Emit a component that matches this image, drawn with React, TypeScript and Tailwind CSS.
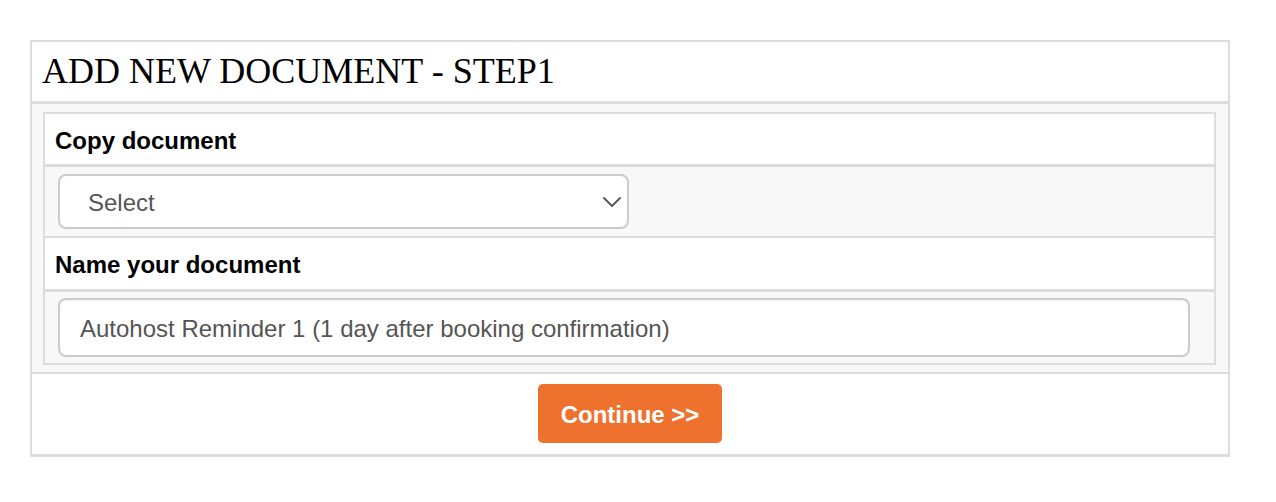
import React from "react";

export default function App() {
  return (
    <div className="w-[1276px] h-[502px] bg-white pt-[40px] pl-[30px]" style={{ fontFamily: '"Liberation Sans", Arial, sans-serif' }}>
      <div className="w-[1200px] border-2 border-b-[3px] border-[#dddddd] bg-white">
        <div className="h-[62px] border-b-[3px] border-[#dddddd] flex items-center pl-[10px]">
          <h1 className="text-[36px] leading-none text-black pb-[1px]" style={{ fontFamily: '"Liberation Serif", "Times New Roman", serif' }}>
            ADD NEW DOCUMENT - STEP1
          </h1>
        </div>
        <div className="bg-[#f8f8f8] pl-[11px] pr-[12px] pt-[8px] pb-[7px]">
          <div className="border-2 border-[#dddddd]">
            <div className="h-[53px] bg-white border-b-[3px] border-[#dddddd] flex items-center pl-[10px]">
              <span className="text-[24px] font-bold text-black leading-none pt-[3px]">Copy document</span>
            </div>
            <div className="h-[71px] bg-[#f8f8f8] border-b-2 border-[#dddddd] pt-[7px] pl-[13px]">
              <div className="w-[571px] h-[55px] bg-white border-2 border-[#cccccc] rounded-[8px] flex items-center justify-between pl-[28px] pr-[6px]">
                <span className="text-[24px] text-[#555555] leading-none pt-[3px]">Select</span>
                <svg width="18" height="10" viewBox="0 0 18 10" fill="none">
                  <path d="M1 1l8 8 8-8" stroke="#555555" strokeWidth="1.8" strokeLinecap="round" strokeLinejoin="round" />
                </svg>
              </div>
            </div>
            <div className="h-[54px] bg-white border-b-[3px] border-[#dddddd] flex items-center pl-[10px]">
              <span className="text-[24px] font-bold text-black leading-none pt-[2px]">Name your document</span>
            </div>
            <div className="h-[71px] bg-[#f8f8f8] pt-[6px] pl-[13px]">
              <div className="w-[1132px] h-[59px] bg-white border-2 border-[#cccccc] rounded-[8px] flex items-center pl-[20px] shadow-[inset_0_1px_2px_rgba(0,0,0,0.06)]">
                <span className="text-[24px] text-[#555555] leading-none pt-[2px]">Autohost Reminder 1 (1 day after booking confirmation)</span>
              </div>
            </div>
          </div>
        </div>
        <div className="h-[82px] border-t-2 border-[#dddddd] flex justify-center pt-[10px]">
          <button className="w-[184px] h-[59px] bg-[#ee722e] rounded-[5px] text-white text-[24px] font-bold leading-none pt-[2px]">
            Continue &gt;&gt;
          </button>
        </div>
      </div>
    </div>
  );
}
